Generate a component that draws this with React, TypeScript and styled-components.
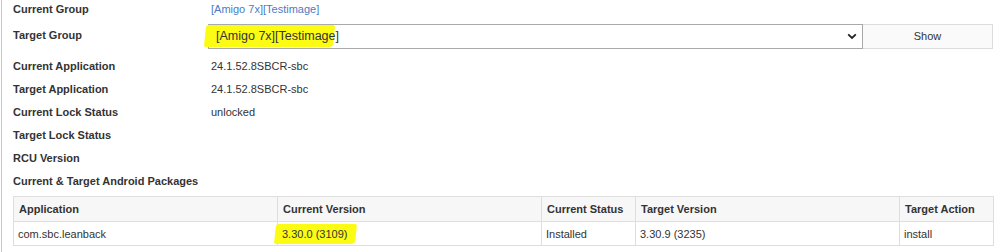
import styled, { createGlobalStyle } from 'styled-components';

const GlobalStyle = createGlobalStyle`
  body {
    margin: 0;
    background: #ffffff;
    font-family: "Liberation Sans", Arial, sans-serif;
    color: #333333;
  }
`;

const Page = styled.div`
  margin-left: 1px;
  border-left: 1px solid #c8c8c8;
  padding: 0 8px 0 11px;
  height: 252px;
  box-sizing: border-box;
`;

const InfoGrid = styled.div`
  display: grid;
  grid-template-columns: 198px 1fr;
`;

const Label = styled.div<{ $height: number }>`
  height: ${p => p.$height}px;
  display: flex;
  align-items: center;
  font-size: 11px;
  font-weight: bold;
  color: #333;
`;

const Value = styled.div<{ $height: number }>`
  height: ${p => p.$height}px;
  display: flex;
  align-items: center;
  font-size: 11px;
  color: #333;
`;

const Link = styled.a`
  color: #4a7cc4;
  text-decoration: none;
`;

const SelectRow = styled.div`
  flex: 1;
  display: flex;
  height: 25px;
  margin-left: -3px;
  margin-right: -1px;
`;

const SelectBox = styled.div`
  flex: 1;
  position: relative;
  display: flex;
  align-items: center;
  justify-content: space-between;
  border: 1px solid #a9a9a9;
  background: #fff;
  padding: 0 5px 0 7px;
  font-size: 12.5px;
  color: #333;
`;

const ShowButton = styled.button`
  width: 130px;
  border: 1px solid #dcdcdc;
  border-left: none;
  background: #fafafa;
  font-family: "Liberation Sans", Arial, sans-serif;
  font-size: 11px;
  color: #333;
  padding: 0;
`;

const Highlight = styled.span<{ $left: number; $right: number; $top: number; $bottom: number }>`
  position: relative;
  z-index: 0;

  &::before {
    content: '';
    position: absolute;
    z-index: -1;
    left: ${p => p.$left}px;
    right: ${p => p.$right}px;
    top: ${p => p.$top}px;
    bottom: ${p => p.$bottom}px;
    background: #fbfb14;
    border-radius: 3px 2px 4px 2px;
    transform: skewX(-6deg);
  }
`;

const Section = styled.div`
  height: 23px;
  display: flex;
  align-items: center;
  font-size: 11px;
  font-weight: bold;
  color: #333;
`;

const Table = styled.table`
  border-collapse: collapse;
  table-layout: fixed;
  width: 980px;
  margin-top: 4px;
  font-size: 11px;
  color: #333;
`;

const Th = styled.th<{ $width: number }>`
  box-sizing: border-box;
  width: ${p => p.$width}px;
  height: 25px;
  text-align: left;
  padding: 0 5px;
  background: #f7f7f7;
  border: 1px solid #dedede;
  font-weight: bold;
  white-space: nowrap;
`;

const Td = styled.td`
  height: 23px;
  padding: 0 4px;
  border: 1px solid #dedede;
  white-space: nowrap;
`;

const Chevron = () => (
  <svg width="10" height="7" viewBox="0 0 10 7">
    <path d="M1.2 1.3 L5 5 L8.8 1.3" fill="none" stroke="#222" strokeWidth="1.8" />
  </svg>
);

const rows = [
  { label: 'Current Application', value: '24.1.52.8SBCR-sbc' },
  { label: 'Target Application', value: '24.1.52.8SBCR-sbc' },
  { label: 'Current Lock Status', value: 'unlocked' },
  { label: 'Target Lock Status', value: '' },
  { label: 'RCU Version', value: '' },
];

const columns = [
  { title: 'Application', width: 264 },
  { title: 'Current Version', width: 264 },
  { title: 'Current Status', width: 94 },
  { title: 'Target Version', width: 264 },
  { title: 'Target Action', width: 94 },
];

export default function App() {
  return (
    <>
      <GlobalStyle />
      <Page>
        <InfoGrid>
          <Label $height={18}>Current Group</Label>
          <Value $height={18}>
            <Link href="#">[Amigo 7x][Testimage]</Link>
          </Value>

          <Label $height={34}>Target Group</Label>
          <Value $height={36}>
            <SelectRow>
              <SelectBox>
                <Highlight $left={-11} $right={5} $top={-4} $bottom={-4}>
                  [Amigo 7x][Testimage]
                </Highlight>
                <Chevron />
              </SelectBox>
              <ShowButton>Show</ShowButton>
            </SelectRow>
          </Value>

          {rows.map(r => (
            <>
              <Label key={r.label} $height={23}>{r.label}</Label>
              <Value key={r.label + '-v'} $height={23}>{r.value}</Value>
            </>
          ))}
        </InfoGrid>

        <Section>Current &amp; Target Android Packages</Section>

        <Table>
          <thead>
            <tr>
              {columns.map(c => (
                <Th key={c.title} $width={c.width}>{c.title}</Th>
              ))}
            </tr>
          </thead>
          <tbody>
            <tr>
              <Td>com.sbc.leanback</Td>
              <Td>
                <Highlight $left={-7} $right={-9} $top={-4} $bottom={-4}>
                  3.30.0 (3109)
                </Highlight>
              </Td>
              <Td>Installed</Td>
              <Td>3.30.9 (3235)</Td>
              <Td>install</Td>
            </tr>
          </tbody>
        </Table>
      </Page>
    </>
  );
}
